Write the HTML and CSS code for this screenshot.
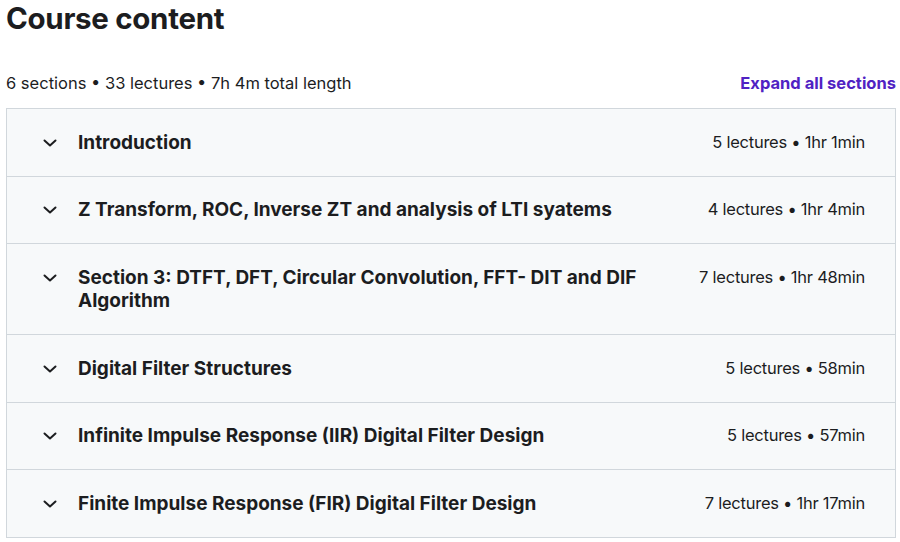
FILE: index.html
```html
<!DOCTYPE html>
<html>
<head>
<meta charset="utf-8">
<link rel="stylesheet" href="styles.css">
</head>
<body>
<div class="page">
  <h2 class="heading">Course content</h2>
  <div class="meta-row">
    <span class="meta">6 sections • 33 lectures • 7h 4m total length</span>
    <button class="expand">Expand all sections</button>
  </div>
  <div class="sections">
    <div class="section">
      <svg class="chev" viewBox="0 0 14 8"><path d="M1.5 1.5 L7 6.5 L12.5 1.5" /></svg>
      <span class="title">Introduction</span>
      <span class="content">5 lectures • 1hr 1min</span>
    </div>
    <div class="section">
      <svg class="chev" viewBox="0 0 14 8"><path d="M1.5 1.5 L7 6.5 L12.5 1.5" /></svg>
      <span class="title">Z Transform, ROC, Inverse ZT and analysis of LTI syatems</span>
      <span class="content">4 lectures • 1hr 4min</span>
    </div>
    <div class="section">
      <svg class="chev" viewBox="0 0 14 8"><path d="M1.5 1.5 L7 6.5 L12.5 1.5" /></svg>
      <span class="title">Section 3: DTFT, DFT, Circular Convolution, FFT- DIT and DIF Algorithm</span>
      <span class="content">7 lectures • 1hr 48min</span>
    </div>
    <div class="section">
      <svg class="chev" viewBox="0 0 14 8"><path d="M1.5 1.5 L7 6.5 L12.5 1.5" /></svg>
      <span class="title">Digital Filter Structures</span>
      <span class="content">5 lectures • 58min</span>
    </div>
    <div class="section">
      <svg class="chev" viewBox="0 0 14 8"><path d="M1.5 1.5 L7 6.5 L12.5 1.5" /></svg>
      <span class="title">Infinite Impulse Response (IIR) Digital Filter Design</span>
      <span class="content">5 lectures • 57min</span>
    </div>
    <div class="section">
      <svg class="chev" viewBox="0 0 14 8"><path d="M1.5 1.5 L7 6.5 L12.5 1.5" /></svg>
      <span class="title">Finite Impulse Response (FIR) Digital Filter Design</span>
      <span class="content">7 lectures • 1hr 17min</span>
    </div>
  </div>
</div>
</body>
</html>
```

FILE: styles.css
```css
* { box-sizing: border-box; }
html, body {
  margin: 0;
  padding: 0;
  background: #ffffff;
}
body {
  font-family: "Inter", "Liberation Sans", sans-serif;
  color: #1c1d1f;
}
.page {
  padding: 0 4px 0 6px;
}
.heading {
  margin: 0;
  padding-top: 1px;
  font-size: 29.5px;
  line-height: 35px;
  font-weight: 700;
  letter-spacing: -0.3px;
}
.meta-row {
  display: flex;
  justify-content: space-between;
  align-items: center;
  margin-top: 36px;
  height: 22px;
}
.meta {
  font-size: 16.5px;
  font-weight: 400;
}
.expand {
  border: none;
  background: none;
  padding: 0;
  font-family: inherit;
  font-size: 16.5px;
  font-weight: 700;
  color: #5022c3;
  cursor: pointer;
}
.sections {
  margin-top: 14px;
  border: 1px solid #d1d7dc;
  border-bottom: none;
}
.section {
  display: flex;
  align-items: flex-start;
  background: #f7f9fa;
  border-bottom: 1px solid #d1d7dc;
  padding: 21.6px 30px 21.6px 36px;
}
.chev {
  width: 14px;
  height: 8px;
  flex: none;
  margin-top: 8px;
  fill: none;
  stroke: #1c1d1f;
  stroke-width: 2;
  stroke-linecap: round;
  stroke-linejoin: round;
}
.title {
  flex: 1;
  margin-left: 21px;
  font-size: 19px;
  line-height: 23.4px;
  font-weight: 700;
}
.content {
  flex: none;
  margin-left: 40px;
  font-size: 16.5px;
  line-height: 23.4px;
  font-weight: 400;
  letter-spacing: -0.25px;
}
```
